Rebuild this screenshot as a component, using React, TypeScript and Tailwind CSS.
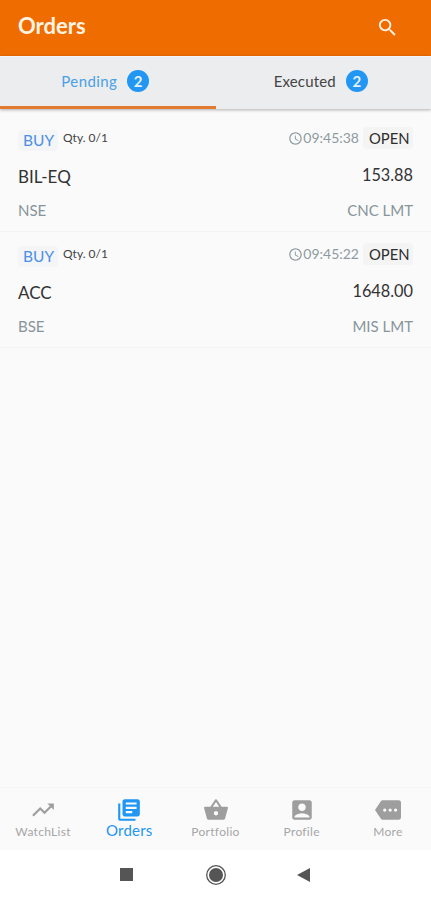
import React, { useState } from "react";
import {
  MdAccessTime,
  MdAccountBox,
  MdLibraryBooks,
  MdMore,
  MdSearch,
  MdShoppingBasket,
  MdTrendingUp,
} from "react-icons/md";
import type { IconType } from "react-icons";

interface Order {
  side: string;
  qty: string;
  time: string;
  status: string;
  symbol: string;
  price: string;
  exchange: string;
  type: string;
}

const orders: Order[] = [
  {
    side: "BUY",
    qty: "0/1",
    time: "09:45:38",
    status: "OPEN",
    symbol: "BIL-EQ",
    price: "153.88",
    exchange: "NSE",
    type: "CNC LMT",
  },
  {
    side: "BUY",
    qty: "0/1",
    time: "09:45:22",
    status: "OPEN",
    symbol: "ACC",
    price: "1648.00",
    exchange: "BSE",
    type: "MIS LMT",
  },
];

const tabs = [
  { label: "Pending", count: 2 },
  { label: "Executed", count: 2 },
];

const navItems: { label: string; icon: IconType }[] = [
  { label: "WatchList", icon: MdTrendingUp },
  { label: "Orders", icon: MdLibraryBooks },
  { label: "Portfolio", icon: MdShoppingBasket },
  { label: "Profile", icon: MdAccountBox },
  { label: "More", icon: MdMore },
];

const OrderRow: React.FC<{ order: Order }> = ({ order }) => (
  <li className="h-[116px] border-b border-[#f2f3f3] px-[18px] pt-[11px]">
    <div className="flex h-[24px] items-start justify-between">
      <div className="flex items-start">
        <span className="mt-[3px] h-[21px] w-[40px] rounded-sm bg-[#f4f5f6] pl-[5px] text-[15.5px] leading-[21px] text-[#4b8fe6]">
          {order.side}
        </span>
        <span className="ml-[5px] text-[12px] leading-[22px] text-[#444]">
          Qty. {order.qty}
        </span>
      </div>
      <div className="flex items-start">
        <MdAccessTime className="mt-[4px] size-[15px] text-[#8e9ba0]" />
        <span className="text-[14px] leading-[22px] text-[#8e9ba0]">{order.time}</span>
        <span className="ml-[4px] h-[22px] w-[50px] rounded-sm bg-[#f4f4f4] pl-[6px] text-[14.8px] leading-[22px] text-[#2d2d2d]">
          {order.status}
        </span>
      </div>
    </div>
    <div className="mt-[13px] flex justify-between text-[#333]">
      <span className="pt-[2px] text-[17px] leading-[22px]">{order.symbol}</span>
      <span className="text-[16.3px] leading-[22px]">{order.price}</span>
    </div>
    <div className="mt-[11px] flex justify-between text-[15px] leading-[22px] text-[#87959b]">
      <span>{order.exchange}</span>
      <span>{order.type}</span>
    </div>
  </li>
);

export default function App() {
  const [activeTab, setActiveTab] = useState("Pending");
  const [activeNav, setActiveNav] = useState("Orders");

  return (
    <div className="flex h-[900px] w-[431px] flex-col overflow-hidden bg-[#fafafa] font-['Lato',sans-serif]">
      <header className="flex h-[56px] shrink-0 items-start justify-between bg-[#ef6c00] pl-[18px] pr-[32px] text-[#fff3e4]">
        <h1 className="pt-[11px] text-[22px] font-bold leading-[30px]">Orders</h1>
        <button aria-label="Search" className="mt-[16px]">
          <MdSearch className="size-[23px]" />
        </button>
      </header>

      <div className="flex h-[53px] shrink-0 border-t border-[#f4f6f7] bg-[#ebedee] shadow-[0_1px_3px_rgba(0,0,0,0.3)]">
        {tabs.map(({ label, count }) => (
          <button
            key={label}
            onClick={() => setActiveTab(label)}
            className={`flex flex-1 items-center justify-center gap-[10px] border-b-[3px] pb-px pr-[5px] text-[15px] ${
              activeTab === label
                ? "border-[#e27a32] tracking-[0.4px] text-[#4aa0e6]"
                : "border-transparent tracking-[0.15px] text-[#444]"
            }`}
          >
            <span>{label}</span>
            <span className="flex size-[22px] items-center justify-center rounded-full bg-[#2196f3] text-[15px] font-bold tracking-normal text-[#e3f2fd]">
              {count}
            </span>
          </button>
        ))}
      </div>

      <ul className="flex-1 pt-[7px]">
        {orders.map((order) => (
          <OrderRow key={order.time} order={order} />
        ))}
      </ul>

      <nav className="flex h-[63px] shrink-0 border-t border-[#f5f5f5] bg-[#fafafa]">
        {navItems.map(({ label, icon: Icon }) => {
          const active = activeNav === label;
          return (
            <button
              key={label}
              onClick={() => setActiveNav(label)}
              className={`flex flex-1 flex-col items-center pt-[9px] ${
                active ? "text-[#2196f3]" : "text-[#9e9e9e]"
              }`}
            >
              <Icon className="size-[26px]" />
              <span
                className={
                  active
                    ? "-mt-[2px] text-[15px] leading-[18px] tracking-[0.2px]"
                    : "text-[12px] leading-[18px] tracking-[0.3px] text-[#a6a6a6]"
                }
              >
                {label}
              </span>
            </button>
          );
        })}
      </nav>

      {/* Android system navigation */}
      <div className="flex h-[50px] shrink-0 items-center justify-center bg-white">
        <svg className="h-[22px] w-[204px]" viewBox="0 0 204 22" fill="#555">
          <rect x="6" y="4" width="13" height="13" />
          <circle cx="102" cy="11" r="9.3" fill="none" stroke="#555" strokeWidth="1.3" />
          <circle cx="102" cy="11" r="7" />
          <path d="M183 11 L196 4 V18 Z" />
        </svg>
      </div>
    </div>
  );
}
